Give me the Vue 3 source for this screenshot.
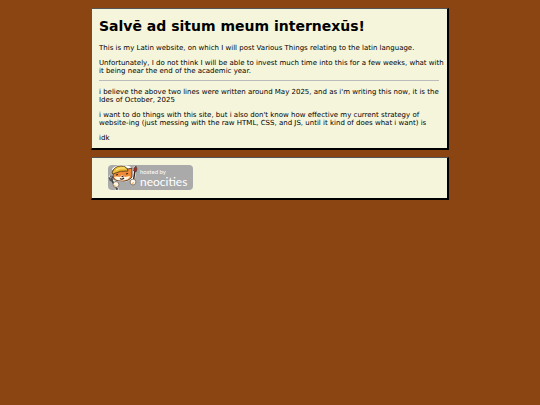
<script setup>
const paragraphs = [
  'This is my Latin website, on which I will post Various Things relating to the latin language.',
  'Unfortunately, I do not think I will be able to invest much time into this for a few weeks, what with it being near the end of the academic year.',
];

const updates = [
  "i believe the above two lines were written around May 2025, and as i'm writing this now, it is the Ides of October, 2025",
  "i want to do things with this site, but i also don't know how effective my current strategy of website-ing (just messing with the raw HTML, CSS, and JS, until it kind of does what i want) is",
  'idk',
];
</script>

<template>
  <div class="page">
    <main class="box">
      <h1>Salvē ad situm meum internexūs!</h1>
      <p v-for="text in paragraphs" :key="text">{{ text }}</p>
      <hr>
      <p v-for="text in updates" :key="text">{{ text }}</p>
    </main>

    <footer class="box footer">
      <a class="badge" href="#" aria-label="hosted by neocities">
        <svg class="cat" viewBox="0 0 32 26" aria-hidden="true">
          <!-- white outline -->
          <g fill="#fff" stroke="#fff" stroke-width="1.6" stroke-linejoin="round" stroke-linecap="round">
            <path d="M5 12 L5 4 Q9 0 16 1 Q22 1 25 5 L24 12 Q20 17 13 16 Q6 16 5 12Z" />
            <path d="M2 12 L7 19 L9 24 M27 3 L25 17" stroke-width="3" />
          </g>
          <!-- fork and brush -->
          <g fill="none" stroke-linecap="round">
            <path d="M3 14 L9 24" stroke="#444" stroke-width="2" />
            <path d="M1 12 L2 15 Q4 17 5 14 L4 11 M2.500 11 L4 15" stroke="#555" stroke-width="1.1" />
            <path d="M27 5 L25 19" stroke="#3a2520" stroke-width="1.5" />
          </g>
          <path d="M25.500 6 L26 3 L28 1 L29 4 L28 7Z" fill="#a52b28" stroke="#432" stroke-width=".6" />
          <!-- head -->
          <path d="M5 12 L5 5 L8 6 Q15 1 20 4 L24 3 L24 12 Q20 17 13 16 Q6 16 5 12Z" fill="#ef8a38" stroke="#33251b" stroke-width=".8" />
          <path d="M6 12 Q8 11 12 12 L14 10 L17 12 L22 11 Q21 15 15 15.500 Q8 16 6 12Z" fill="#fff5e5" />
          <path d="M4 8 Q6 1 13 1 Q19 1 20 6 Q13 5 5 9Z" fill="#efbd37" stroke="#574018" stroke-width=".9" />
          <path d="M8 5 Q12 2 17 3" fill="none" stroke="#fff09a" stroke-width=".9" />
          <path d="M8 10 L10 9.500 M18 9 L20 8.500 M12 13.500 Q14 15 16 13" fill="none" stroke="#2b2420" stroke-width="1.2" />
          <ellipse cx="14.500" cy="11.500" rx="1.1" ry=".8" fill="#3c2420" />
          <!-- paws -->
          <g fill="#fff8e8" stroke="#59442d" stroke-width=".6">
            <circle cx="8" cy="19.500" r="2.900" />
            <circle cx="25" cy="17" r="2.900" />
          </g>
          <path d="M6 20 L8 21.500 M24 18.500 L26 17.500" stroke="#edaa5c" stroke-width="1" />
        </svg>
        <span class="wordmark">
          <span class="hosted">hosted by</span>
          <span class="name">neocities</span>
        </span>
      </a>
    </footer>
  </div>
</template>

<style>
body {
  background: #8b4513;
}
</style>

<style scoped>
.page {
  max-width: 358px;
  margin: 0 auto;
  padding: 8px;
  display: flex;
  flex-direction: column;
  gap: 7px;
  font-family: Verdana, 'DejaVu Sans', sans-serif;
  font-size: 7px;
  line-height: 8px;
  color: #000;
}

.box {
  padding: 8px 2px 6px 7px;
  background: beige;
  border: solid;
  border-color: #555 #000 #000 #555;
  border-width: 1px 2px 2px 1px;
}

h1 {
  margin: 0 0 9px;
  font-size: 14px;
  line-height: 18px;
}

p {
  margin: 0 0 7px;
}

p:last-child {
  margin-bottom: 0;
}

hr {
  margin: -2px 6px 7px 0;
  border: 0;
  border-top: 1px solid #bbb;
}

.footer {
  padding: 7px 16px 8px;
}

.badge {
  display: flex;
  width: fit-content;
  height: 25px;
  padding-right: 6px;
  background: #aaa;
  border-radius: 4px;
  color: #fff;
  text-decoration: none;
}

.cat {
  width: 32px;
  height: 26px;
}

.wordmark {
  display: flex;
  flex-direction: column;
  padding-top: 3px;
  font-family: 'Liberation Sans Narrow', Lato, sans-serif;
}

.hosted {
  font-size: 6px;
  line-height: 8px;
}

.name {
  font-size: 12px;
  line-height: 11px;
}
</style>
